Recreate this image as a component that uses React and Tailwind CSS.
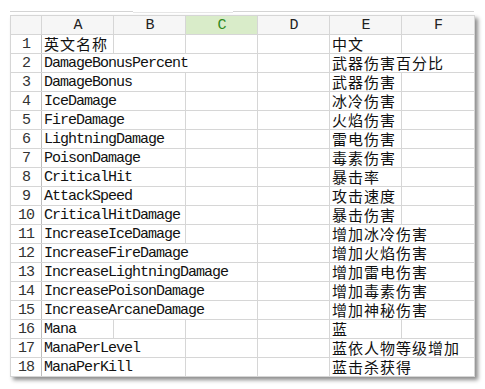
const rows = [
  ["英文名称", 1, "中文", 1],
  ["DamageBonusPercent", 3, "武器伤害百分比", 2],
  ["DamageBonus", 2, "武器伤害", 1],
  ["IceDamage", 2, "冰冷伤害", 1],
  ["FireDamage", 2, "火焰伤害", 1],
  ["LightningDamage", 2, "雷电伤害", 1],
  ["PoisonDamage", 2, "毒素伤害", 1],
  ["CriticalHit", 2, "暴击率", 1],
  ["AttackSpeed", 2, "攻击速度", 1],
  ["CriticalHitDamage", 2, "暴击伤害", 1],
  ["IncreaseIceDamage", 2, "增加冰冷伤害", 2],
  ["IncreaseFireDamage", 3, "增加火焰伤害", 2],
  ["IncreaseLightningDamage", 3, "增加雷电伤害", 2],
  ["IncreasePoisonDamage", 3, "增加毒素伤害", 2],
  ["IncreaseArcaneDamage", 3, "增加神秘伤害", 2],
  ["Mana", 1, "蓝", 1],
  ["ManaPerLevel", 2, "蓝依人物等级增加", 2],
  ["ManaPerKill", 2, "蓝击杀获得", 2],
];

const latin = "font-[family-name:Liberation_Mono,monospace] text-[15px] tracking-[-1px] leading-[20px]";
const cjk = "font-[family-name:Noto_Sans_CJK_SC,sans-serif] text-[15px] tracking-[1px] leading-[18px]";
const cell = "p-0 border border-[#d6d6d6] whitespace-nowrap overflow-hidden";

const isCjk = (s) => /[\u4e00-\u9fff]/.test(s);

function Box({ className = "", children }) {
  return <div className={`h-[18px] ${className}`}>{children}</div>;
}

export default function App() {
  return (
    <div className="min-h-[389px] w-[485px] bg-white pl-[10px] pt-[11px]">
      <div className="flex w-[464px]">
        <div className="h-px w-[123px] bg-[#d4d4d4]" />
        <div className="mt-[1px] h-px w-[100px] bg-[#e6e6e6]" />
        <div className="h-px flex-1 bg-[#d4d4d4]" />
      </div>
      <table className="mt-[2px] w-[464px] table-fixed border-collapse text-[#111] shadow-[3px_3px_4px_rgba(0,0,0,0.45)]">
        <colgroup>
          <col className="w-[31px]" />
          <col className="w-[72px]" />
          <col className="w-[72px]" />
          <col className="w-[72px]" />
          <col className="w-[72px]" />
          <col className="w-[72px]" />
          <col className="w-[73px]" />
        </colgroup>
        <thead>
          <tr>
            <th className={`${cell} border-[#c8c8c8] bg-[#f6f6f6]`}>
              <Box />
            </th>
            {["A", "B", "C", "D", "E", "F"].map((l) => (
              <th
                key={l}
                className={`${cell} font-normal ${
                  l === "C"
                    ? "border-[#c8c8c8] bg-[#d9ecc9] text-[#2f8a1c]"
                    : "border-[#c8c8c8] bg-[#f6f6f6] text-[#222]"
                }`}
              >
                <Box className={`${latin} text-center`}>{l}</Box>
              </th>
            ))}
          </tr>
        </thead>
        <tbody>
          {rows.map(([en, enSpan, zh, zhSpan], i) => (
            <tr key={i}>
              <td className={`${cell} border-r-[#bdbdbd] text-[#333]`}>
                <Box className={`${latin} text-center`}>{i + 1}</Box>
              </td>
              <td colSpan={enSpan} className={cell}>
                <Box className={`${isCjk(en) ? cjk : latin} pl-[2px]`}>{en}</Box>
              </td>
              {Array.from({ length: 4 - enSpan }).map((_, k) => (
                <td key={k} className={cell}>
                  <Box />
                </td>
              ))}
              <td colSpan={zhSpan} className={cell}>
                <Box className={`${cjk} pl-[2px]`}>{zh}</Box>
              </td>
              {zhSpan === 1 && (
                <td className={cell}>
                  <Box />
                </td>
              )}
            </tr>
          ))}
        </tbody>
      </table>
    </div>
  );
}
